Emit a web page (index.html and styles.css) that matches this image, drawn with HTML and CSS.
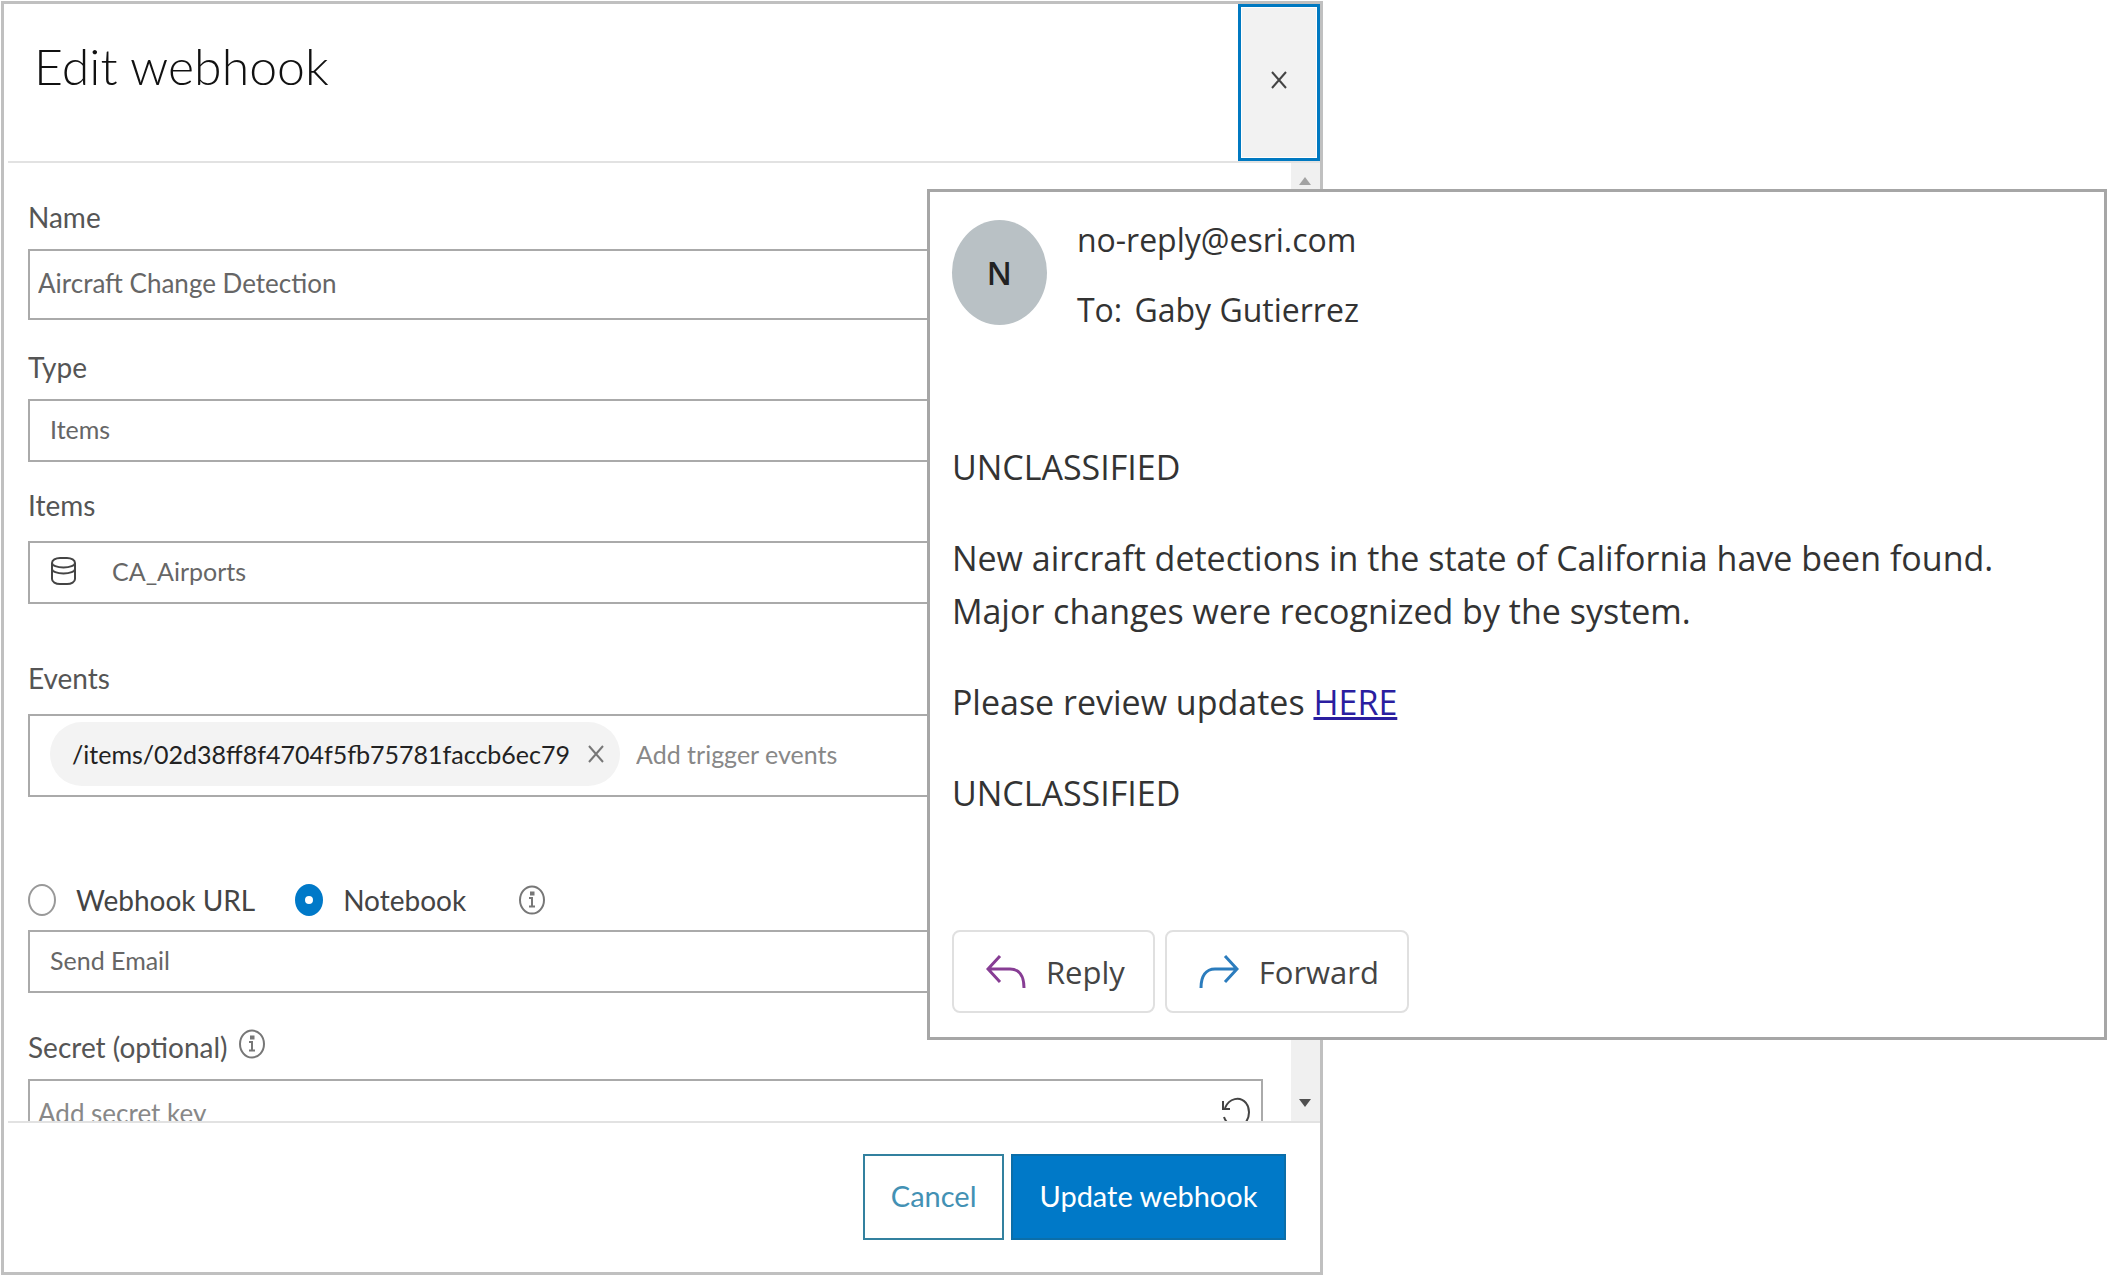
FILE: index.html
```html
<!DOCTYPE html>
<html lang="en">
<head>
    <meta charset="UTF-8">
    <meta name="viewport" content="width=device-width, initial-scale=1.0">
    <title>Edit webhook</title>
    <link rel="stylesheet" href="styles.css">
</head>
<body>
    <main class="dialog">
        <header class="dialog-header">
            <h1>Edit webhook</h1>
            <button type="button" class="close-button" aria-label="Close">
                <svg width="16" height="18" viewBox="0 0 16 18"><path d="M1 1L15 17M15 1L1 17"/></svg>
            </button>
        </header>

        <div class="dialog-body">
            <form class="webhook-form" id="webhookForm">
                <div class="field field-name">
                    <label for="name">Name</label>
                    <input type="text" id="name" class="box box-tall" value="Aircraft Change Detection">
                </div>

                <div class="field">
                    <label for="type">Type</label>
                    <select id="type" class="box box-select">
                        <option>Items</option>
                    </select>
                </div>

                <div class="field field-wide">
                    <label for="items">Items</label>
                    <div class="box box-icon">
                        <svg width="26" height="30" viewBox="0 0 26 30">
                            <rect x="2" y="2" width="23" height="26" rx="8" ry="5"/>
                            <path d="M2 7c0 2.500 5 4.500 11.500 4.500S25 9.500 25 7M2 13c0 2.500 5 4.500 11.500 4.500S25 15.500 25 13"/>
                        </svg>
                        <select id="items">
                            <option>CA_Airports</option>
                        </select>
                    </div>
                </div>

                <div class="field field-wide field-events">
                    <label for="events">Events</label>
                    <div class="box box-events">
                        <span class="chip">
                            /items/02d38ff8f4704f5fb75781faccb6ec79
                            <button type="button" aria-label="Remove event">
                                <svg width="16" height="18" viewBox="0 0 16 18"><path d="M1 1L15 17M15 1L1 17"/></svg>
                            </button>
                        </span>
                        <input type="text" id="events" placeholder="Add trigger events">
                    </div>
                </div>

                <div class="field field-target">
                    <div class="radio-row">
                        <input type="radio" name="target" id="webhookUrl">
                        <label for="webhookUrl">Webhook URL</label>
                        <input type="radio" name="target" id="notebook" checked>
                        <label for="notebook">Notebook</label>
                        <svg class="info" width="28" height="30" viewBox="0 0 28 30">
                            <ellipse cx="14" cy="15" rx="12" ry="13.500"/>
                            <path d="M11 13h3v8M11 21.500h6M13 7.500h2.500v2H13z"/>
                        </svg>
                    </div>
                    <select class="box box-select" aria-label="Notebook name">
                        <option>Send Email</option>
                    </select>
                </div>

                <div class="field">
                    <div class="label-row">
                        <label for="secret">Secret (optional)</label>
                        <svg class="info" width="28" height="30" viewBox="0 0 28 30">
                            <ellipse cx="14" cy="15" rx="12" ry="13.500"/>
                            <path d="M11 13h3v8M11 21.500h6M13 7.500h2.500v2H13z"/>
                        </svg>
                    </div>
                    <div class="box box-tall box-secret">
                        <input type="text" id="secret" placeholder="Add secret key">
                        <button type="button" aria-label="Generate key">
                            <svg width="30" height="34" viewBox="0 0 30 34">
                                <path d="M4 12C8 2 19 0 25 7c4 5 4 13 0 19-6 7-18 6-22-5"/>
                                <path d="M2 5v8h7"/>
                            </svg>
                        </button>
                    </div>
                </div>
            </form>

            <div class="scrollbar">
                <span class="arrow-up"></span>
                <span class="arrow-down"></span>
            </div>
        </div>

        <footer class="dialog-footer">
            <button type="button" class="button">Cancel</button>
            <button type="submit" form="webhookForm" class="button button-primary">Update webhook</button>
        </footer>
    </main>

    <!-- Email preview on top of the dialog -->
    <article class="email">
        <header class="email-header">
            <span class="avatar">N</span>
            <div class="email-people">
                <p>no-reply@esri.com</p>
                <p>To: <span class="recipient">Gaby Gutierrez</span></p>
            </div>
        </header>

        <div class="email-body">
            <p>UNCLASSIFIED</p>
            <p>New aircraft detections in the state of California have been found.<br>Major changes were recognized by the system.</p>
            <p>Please review updates <a href="#">HERE</a></p>
            <p>UNCLASSIFIED</p>
        </div>

        <div class="email-actions">
            <button type="button" class="reply">
                <svg width="40" height="36" viewBox="0 0 40 36"><path d="M14 2L2 15l12 13M2 15h22c9 0 14 7 14 19"/></svg>
                Reply
            </button>
            <button type="button" class="forward">
                <svg width="40" height="36" viewBox="0 0 40 36"><path d="M26 2l12 13-12 13M38 15H16C7 15 2 22 2 34"/></svg>
                Forward
            </button>
        </div>
    </article>
</body>
</html>
```
FILE: styles.css
```css
* {
    box-sizing: border-box;
}

body {
    position: relative;
    margin: 0;
    padding: 1px;
    min-height: 100vh;
    background-color: #fff;
    font-family: Lato, 'Open Sans', sans-serif;
    font-size: 28px;
    color: #555;
}

h1, p {
    margin: 0;
}

button, input, select {
    font: inherit;
    color: inherit;
}

svg {
    display: block;
    flex: none;
    fill: none;
    stroke: #444;
    stroke-width: 2;
}

/* Dialog */
.dialog {
    display: flex;
    flex-direction: column;
    width: 62.75%;
    height: calc(100vh - 2px);
    border: 3px solid #c0c0c0;
}

.dialog-header {
    display: flex;
    justify-content: space-between;
    height: 159px;
    flex: none;
    margin-left: 4px;
    border-bottom: 2px solid #e2e2e2;
}

.dialog-header h1 {
    padding: 32px 0 0 26px;
    font-size: 50px;
    font-weight: 300;
    line-height: 60px;
    color: #111;
}

.close-button {
    display: flex;
    align-items: center;
    justify-content: center;
    width: 82px;
    height: 157px;
    padding: 0 0 6px;
    border: 3px solid #0079c1;
    background-color: #f2f2f2;
    box-shadow: inset 0 0 0 1px #fff;
}

.dialog-body {
    display: flex;
    flex: 1;
    min-height: 0;
}

.webhook-form {
    flex: 1;
    overflow: hidden;
    padding: 36px 28px 0 24px;
}

.field {
    display: flex;
    flex-direction: column;
    gap: 14px;
    margin-bottom: 25px;
}

.field-name {
    margin-bottom: 29px;
}

.field-wide {
    gap: 18px;
    margin-bottom: 56px;
}

.field-events {
    margin-bottom: 85px;
}

.field-target {
    gap: 12px;
    margin-bottom: 36px;
}

label {
    line-height: 36px;
}

.box {
    width: 100%;
    height: 63px;
    padding: 0 20px 4px;
    border: 2px solid #aaa;
    border-radius: 0;
    background-color: #fff;
    font-size: 25px;
    color: #666;
}

.box-tall {
    height: 71px;
    padding: 0 8px 4px;
    font-size: 26px;
}

.box-select {
    appearance: none;
}

.box-icon {
    display: flex;
    align-items: center;
    gap: 36px;
}

.box-icon select,
.box-events input,
.box-secret input {
    appearance: none;
    flex: 1;
    min-width: 0;
    padding: 0;
    border: 0;
    outline: 0;
    background: none;
}

.box-events {
    display: flex;
    align-items: center;
    gap: 16px;
    height: 83px;
}

.chip {
    display: flex;
    align-items: center;
    gap: 18px;
    height: 64px;
    padding: 0 16px 0 22px;
    border-radius: 32px;
    background-color: #f3f3f3;
    color: #222;
}

.chip button,
.box-secret button {
    padding: 0;
    border: 0;
    background: none;
}

.chip svg {
    stroke: #777;
}

::placeholder {
    color: #888;
    opacity: 1;
}

.radio-row {
    display: flex;
    align-items: center;
    color: #444;
}

.radio-row label {
    margin: 0 40px 0 20px;
}

.radio-row input {
    appearance: none;
    width: 28px;
    height: 32px;
    margin: 0;
    border: 2px solid #999;
    border-radius: 50%;
    background-color: #fff;
}

.radio-row input:checked {
    border: 10px solid #0079c8;
    border-width: 12px 10px;
}

.radio-row .info {
    margin-left: 12px;
}

.info {
    stroke: #777;
}

.label-row {
    display: flex;
    gap: 10px;
}

.box-secret {
    display: flex;
    align-items: center;
    padding-right: 10px;
}

/* Scrollbar of the form */
.scrollbar {
    display: flex;
    flex-direction: column;
    align-items: center;
    justify-content: space-between;
    width: 29px;
    padding: 14px 0;
    background-color: #f0f0f0;
}

.arrow-up,
.arrow-down {
    border: 6px solid transparent;
    border-top-width: 0;
    border-bottom: 8px solid #a3a3a3;
}

.arrow-down {
    border-bottom: 0;
    border-top: 8px solid #505050;
}

.dialog-footer {
    display: flex;
    justify-content: flex-end;
    gap: 7px;
    margin-left: 4px;
    padding: 31px 34px 32px;
    border-top: 2px solid #e2e2e2;
}

.button {
    height: 86px;
    padding: 0 26px 4px;
    border: 2px solid #33819f;
    background-color: #fff;
    font-size: 29px;
    color: #4391b4;
}

.button-primary {
    border-color: #0b6ea9;
    background-color: #0079c8;
    color: #fff;
}

/* Email */
.email {
    position: absolute;
    top: 189px;
    left: 43.97%;
    right: 1px;
    padding: 28px 22px 24px;
    border: 3px solid #a6a6a6;
    background-color: #fff;
    font-family: 'Open Sans', 'Noto Sans', sans-serif;
    font-size: 34px;
    color: #333;
}

.email-header {
    display: flex;
    gap: 30px;
}

.avatar {
    display: flex;
    align-items: center;
    justify-content: center;
    width: 95px;
    height: 105px;
    border-radius: 50%;
    background-color: #b9c1c5;
    font-size: 32px;
    font-weight: 600;
    color: #222;
}

.email-people {
    font-size: 32px;
    line-height: 70px;
    margin-top: -15px;
}

.recipient {
    margin-left: 4px;
}

.email-body {
    display: flex;
    flex-direction: column;
    gap: 38px;
    margin-top: 96px;
    line-height: 53px;
}

.email-body a {
    color: #2a1ea0;
}

.email-actions {
    display: flex;
    gap: 10px;
    margin-top: 110px;
}

.email-actions button {
    display: flex;
    align-items: center;
    gap: 20px;
    height: 83px;
    padding: 0 28px 0 32px;
    border: 2px solid #e0e0e0;
    border-radius: 8px;
    background-color: #fff;
    font-size: 31px;
    color: #444;
}

.reply svg {
    stroke: #873d94;
    stroke-width: 3;
}

.forward svg {
    stroke: #2b7cbd;
    stroke-width: 3;
}
```
